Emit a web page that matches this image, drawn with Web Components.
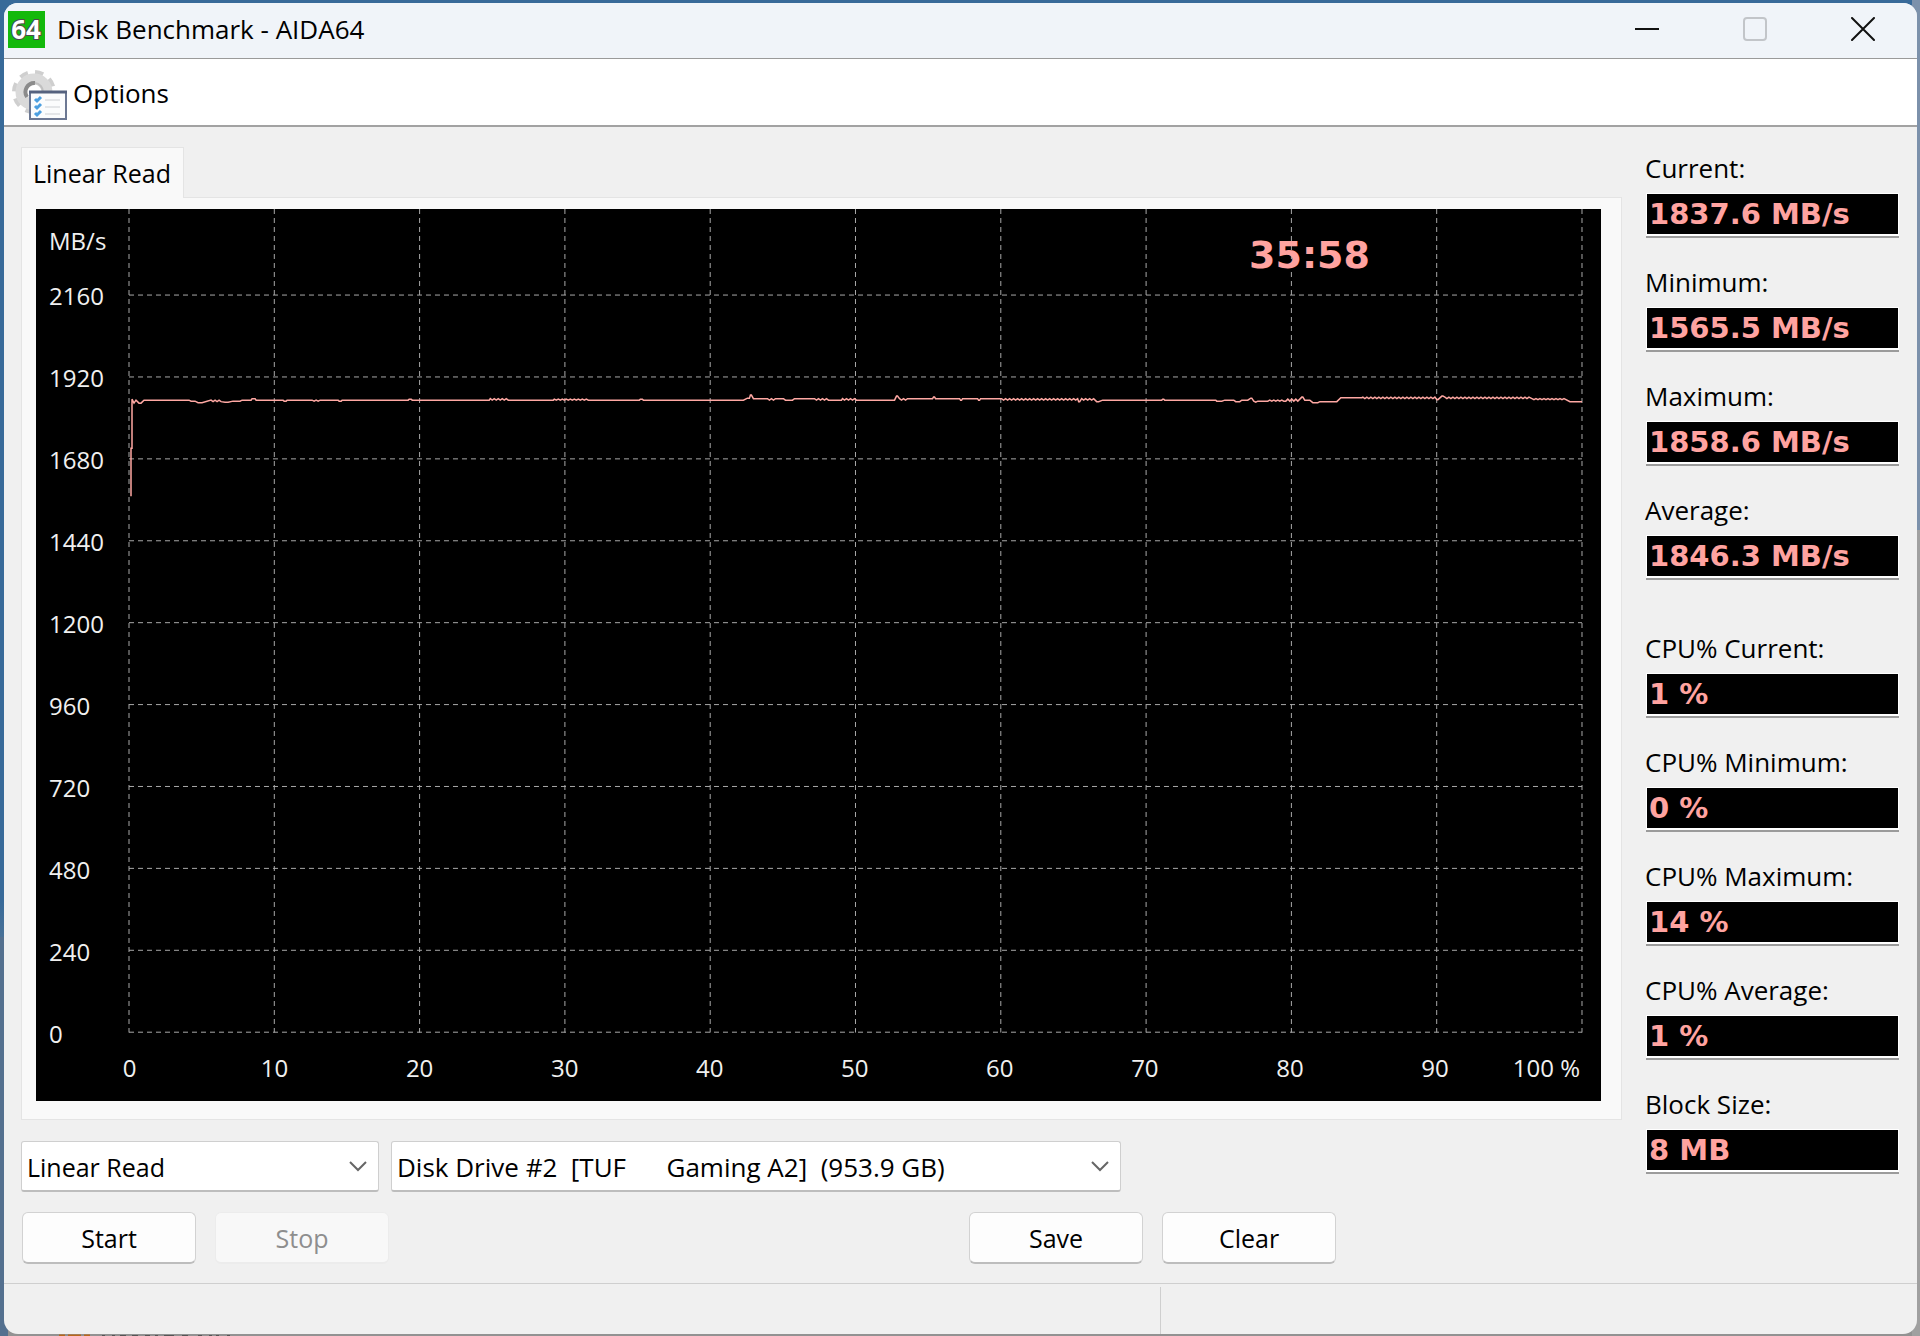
<!DOCTYPE html>
<html lang="en">
<head>
<meta charset="utf-8">
<title>Disk Benchmark - AIDA64</title>
<style>
  body {
    margin: 0;
    font: 26px/36px "Open Sans", "Noto Sans", sans-serif;
    color: #000;
  }
</style>
</head>
<body>
<disk-benchmark></disk-benchmark>

<script>
// Title bar with the app badge and the three caption buttons
class TitleBar extends HTMLElement {
  constructor() {
    super();
    this.attachShadow({ mode: 'open' });
    this.shadowRoot.innerHTML = `
      <style>
        :host {
          display: flex;
          align-items: flex-start;
          height: 55px;
          padding-left: 4px;
          background: #f0f4f9;
          border-bottom: 1px solid #9a9a9a;
        }
        .badge {
          width: 37px;
          height: 37px;
          margin-top: 8px;
          background: #13b90c;
          flex: none;
        }
        .badge text {
          font: bold 26px "Open Sans", sans-serif;
          fill: #fff;
          stroke: #4b4b4b;
          stroke-width: 2;
          paint-order: stroke;
        }
        .title {
          flex: 1;
          padding-left: 12px;
          line-height: 52px;
        }
        button {
          width: 108px;
          height: 52px;
          padding: 0;
          border: 0;
          background: none;
          color: #111;
        }
        button:disabled { color: #c2c5c9; }
        button svg { display: block; margin: 0 auto; }
      </style>
      <svg class="badge" viewBox="0 0 37 37" aria-hidden="true">
        <text x="18" y="28" text-anchor="middle">64</text>
      </svg>
      <span class="title"><slot></slot></span>
      <button type="button" aria-label="Minimize">
        <svg width="24" height="24" viewBox="0 0 24 24"><path d="M0 12h24" stroke="currentColor" stroke-width="2"/></svg>
      </button>
      <button type="button" aria-label="Maximize" disabled>
        <svg width="24" height="24" viewBox="0 0 24 24"><rect x="1" y="1" width="22" height="22" rx="3" fill="none" stroke="currentColor" stroke-width="2"/></svg>
      </button>
      <button type="button" aria-label="Close">
        <svg width="24" height="24" viewBox="0 0 24 24"><path d="M1 1l22 22M23 1L1 23" stroke="currentColor" stroke-width="2" stroke-linecap="round"/></svg>
      </button>
    `;
  }
}

customElements.define('title-bar', TitleBar);

// Toolbar with a single Options entry
class OptionsBar extends HTMLElement {
  constructor() {
    super();
    this.attachShadow({ mode: 'open' });
    this.shadowRoot.innerHTML = `
      <style>
        :host {
          display: flex;
          height: 66px;
          background: #fff;
          border-bottom: 2px solid #a2a2a2;
        }
        button {
          display: flex;
          align-items: center;
          gap: 5px;
          padding: 2px 8px 0;
          border: 0;
          background: none;
          font: inherit;
          color: inherit;
        }
      </style>
      <button type="button">
        <svg width="56" height="56" viewBox="0 0 56 56" aria-hidden="true">
          <g fill="none">
            <circle cx="22" cy="27" r="19" stroke="#cfcfcf" stroke-width="6" stroke-dasharray="8 7"/>
            <circle cx="22" cy="27" r="13" stroke="#dadada" stroke-width="11"/>
            <path d="M15 32a9 9 0 0 1 8-14" stroke="#8b8b8b" stroke-width="4"/>
            <path d="M23 18a9 9 0 0 1 8 9" stroke="#c0c0c0" stroke-width="2"/>
          </g>
          <rect x="18" y="27" width="36" height="27" fill="#fbfcfd" stroke="#6c7893" stroke-width="2"/>
          <path d="M17 27h38" stroke="#55627f" stroke-width="3"/>
          <path d="M23 34l2 2 4-4M23 41l2 2 4-4M23 48l2 2 4-4" fill="none" stroke="#4c9fe0" stroke-width="3"/>
          <path d="M33 35h15M33 42h15M33 49h15" stroke="#cdd0d4" stroke-width="1"/>
        </svg>
        <slot></slot>
      </button>
    `;
  }
}

customElements.define('options-bar', OptionsBar);

// Read speed over disk position: dashed grid, axis labels and the trace
class SpeedChart extends HTMLElement {
  constructor() {
    super();
    this.attachShadow({ mode: 'open' });
    this.shadowRoot.innerHTML = `
      <style>
        :host {
          display: grid;
          grid-template-columns: 93px 1fr 19px;
          grid-template-rows: 823fr 68fr;
          background: #000;
          color: #f0f0f0;
          font-size: 24px;
          line-height: 24px;
        }
        .speed {
          grid-area: 1 / 1 / 3 / 2;
          display: grid;
          grid-template-rows: 46fr repeat(10, 82fr) 26fr;
          align-items: center;
          padding-left: 13px;
        }
        .speed .unit {
          align-self: end;
          padding-bottom: 2px;
        }
        .plot {
          grid-area: 1 / 2;
          position: relative;
          min-height: 0;
        }
        svg {
          display: block;
          width: 100%;
          height: 100%;
          overflow: visible;
        }
        path {
          fill: none;
          vector-effect: non-scaling-stroke;
        }
        .grid { stroke: #a8a8a8; stroke-dasharray: 5 4; }
        .trace { stroke: #ffa8a3; stroke-width: 1.5; }
        .time {
          position: absolute;
          top: 24px;
          right: 212px;
          font: bold 38px/44px "DejaVu Sans", sans-serif;
          color: #ffa3a0;
        }
        .position {
          grid-area: 2 / 1 / 3 / 4;
          display: grid;
          grid-template-columns: repeat(10, 2fr) 1fr;
          align-items: center;
          padding: 2px 21px 0;
          text-align: center;
        }
        .position .last {
          justify-self: end;
          white-space: nowrap;
        }
      </style>
      <div class="speed"><span class="unit">MB/s</span></div>
      <div class="plot">
        <svg viewBox="0 0 1452 823" preserveAspectRatio="none">
          <path class="grid"/>
          <path class="trace"/>
        </svg>
        <span class="time"></span>
      </div>
      <div class="position"></div>
    `;
  }

  connectedCallback() {
    const root = this.shadowRoot;
    const speed = root.querySelector('.speed');
    const position = root.querySelector('.position');
    root.querySelector('.time').textContent = this.getAttribute('time');

    for (let mb = 2160; mb >= 0; mb -= 240) {
      speed.appendChild(this._label(mb));
    }
    for (let pct = 0; pct < 100; pct += 10) {
      position.appendChild(this._label(pct));
    }
    const last = this._label('100 %');
    last.className = 'last';
    position.appendChild(last);

    root.querySelector('.grid').setAttribute('d', this._grid());
    root.querySelector('.trace').setAttribute('d', this._trace());
  }

  _label(text) {
    const span = document.createElement('span');
    span.textContent = text;
    return span;
  }

  _grid() {
    let d = '';
    for (let i = 0; i <= 10; i++) {
      d += `M${i * 145.2} 0V823`;
    }
    for (let i = 0; i < 10; i++) {
      d += `M0 ${86 + i * 81.85}H1452`;
    }
    return d;
  }

  // Each run is [from, to, y] for a flat part or [from, to, y, y2] for a ripple
  _trace() {
    const runs = [
      [15, 60, 191],
      [62, 66, 192], [69, 73, 193.5], [82, 92, 191, 192.5], [96, 99, 193],
      [104, 111, 192], [113, 122, 191], [123, 126, 189.5], [127, 154, 191],
      [155, 157, 192], [158, 182, 191], [183, 191, 191, 192], [192, 209, 191],
      [210, 212, 192], [213, 279, 191], [280, 282, 190], [283, 360, 191],
      [361, 380, 189.5, 191], [381, 424, 191], [425, 460, 190, 191], [461, 510, 191],
      [511, 513, 190], [514, 614, 191], [618, 620, 189],
      [621, 622, 186], [624, 637, 189.5], [638, 644, 189.5, 191],
      [646, 654, 189.5], [656, 663, 191], [665, 684, 189.5],
      [685, 700, 189.5, 191], [702, 712, 191], [713, 727, 189.5, 191],
      [734, 765, 191], [767, 768, 187], [770, 778, 189.5, 191],
      [780, 803, 189.5], [804, 805, 188], [806, 830, 189.5], [831, 832, 191],
      [833, 848, 189.5], [849, 850, 191], [851, 871, 189.5],
      [872, 948, 189.5, 191], [949, 950, 192.5], [952, 965, 189.5, 191],
      [967, 969, 192.5], [973, 1032, 191], [1033, 1034, 190],
      [1035, 1086, 191], [1087, 1092, 192], [1095, 1104, 191],
      [1106, 1110, 192.5], [1112, 1118, 191], [1121, 1122, 189],
      [1124, 1128, 192, 193], [1130, 1138, 192], [1140, 1154, 191, 192],
      [1156, 1170, 192, 190], [1172, 1173, 188], [1175, 1180, 191],
      [1183, 1188, 193.5], [1190, 1207, 192.5], [1211, 1213, 188.5],
      [1215, 1232, 188.5], [1233, 1306, 188, 189.5], [1307, 1308, 190.5],
      [1312, 1313, 187], [1315, 1400, 188, 189.5], [1402, 1434, 189.5, 190.5],
      [1440, 1452, 192.5],
    ];
    let d = 'M2 287V239H3V190L5 194L7 191L10 194H12';
    for (const [from, to, y, y2 = y] of runs) {
      d += `L${from} ${y}`;
      if (y === y2) {
        d += `H${to}`;
        continue;
      }
      for (let x = from + 2, i = 1; x <= to; x += 2, i++) {
        d += `L${x} ${i % 2 ? y2 : y}`;
      }
    }
    return d;
  }
}

customElements.define('speed-chart', SpeedChart);

// One tab and the panel below it
class TabPanel extends HTMLElement {
  constructor() {
    super();
    this.attachShadow({ mode: 'open' });
    this.shadowRoot.innerHTML = `
      <style>
        :host {
          display: flex;
          flex-direction: column;
        }
        button {
          align-self: flex-start;
          height: 51px;
          margin-bottom: -1px;
          padding: 0 12px 0 11px;
          border: 1px solid #e4e4e4;
          border-bottom: 0;
          background: #f9f9f9;
          font: inherit;
          font-size: 25px;
          color: inherit;
          z-index: 1;
        }
        .panel {
          flex: 1;
          display: flex;
          padding: 11px 20px 18px 14px;
          border: 1px solid #e4e4e4;
          background: #f9f9f9;
        }
        ::slotted(*) { flex: 1; }
      </style>
      <button type="button" role="tab" aria-selected="true"></button>
      <div class="panel" role="tabpanel"><slot></slot></div>
    `;
  }

  connectedCallback() {
    this.shadowRoot.querySelector('button').textContent = this.getAttribute('label');
  }
}

customElements.define('tab-panel', TabPanel);

// Label with a black LED style value box
class ValueReadout extends HTMLElement {
  constructor() {
    super();
    this.attachShadow({ mode: 'open' });
    this.shadowRoot.innerHTML = `
      <style>
        :host {
          display: flex;
          flex-direction: column;
          gap: 7px;
        }
        output {
          height: 40px;
          margin-left: 1px;
          padding-left: 2px;
          border: 1px solid #fff;
          border-bottom-width: 2px;
          box-shadow: 0 2px #9b9b9b;
          background: #000;
          font: bold 29px/40px "DejaVu Sans", sans-serif;
          color: #ffa3a0;
        }
      </style>
      <label for="value"></label>
      <output id="value"><slot></slot></output>
    `;
  }

  connectedCallback() {
    this.shadowRoot.querySelector('label').textContent = this.getAttribute('label');
  }
}

customElements.define('value-readout', ValueReadout);

// Drop-down with a thin chevron
class DropDown extends HTMLElement {
  constructor() {
    super();
    this.attachShadow({ mode: 'open' });
    this.shadowRoot.innerHTML = `
      <style>
        :host {
          display: block;
          position: relative;
        }
        select {
          appearance: none;
          display: block;
          width: 100%;
          height: 51px;
          padding: 2px 40px 0 5px;
          border: 1px solid #cfcfcf;
          border-bottom: 2px solid #bdbdbd;
          border-radius: 3px;
          background: #fff;
          font: inherit;
          color: #000;
        }
        svg {
          position: absolute;
          top: 20px;
          right: 12px;
          pointer-events: none;
        }
      </style>
      <select><option></option></select>
      <svg width="18" height="12" viewBox="0 0 18 12"><path d="M1 1l8 8 8-8" fill="none" stroke="#666" stroke-width="2"/></svg>
    `;
  }

  connectedCallback() {
    const select = this.shadowRoot.querySelector('select');
    select.setAttribute('aria-label', this.getAttribute('label'));
    select.options[0].textContent = this.getAttribute('value');
  }
}

customElements.define('drop-down', DropDown);

class PushButton extends HTMLElement {
  constructor() {
    super();
    this.attachShadow({ mode: 'open' });
    this.shadowRoot.innerHTML = `
      <style>
        :host { display: block; }
        button {
          display: block;
          width: 174px;
          height: 52px;
          padding: 2px 0 0;
          border: 1px solid #d2d2d2;
          border-bottom: 2px solid #bdbdbd;
          border-radius: 6px;
          background: #fdfdfd;
          font: inherit;
          font-size: 25px;
          color: #000;
        }
        button:disabled {
          border-color: #ececec;
          background: #f8f8f8;
          color: #8e8e8e;
        }
      </style>
      <button type="button"><slot></slot></button>
    `;
  }

  connectedCallback() {
    this.shadowRoot.querySelector('button').disabled = this.hasAttribute('disabled');
  }
}

customElements.define('push-button', PushButton);

class DiskBenchmark extends HTMLElement {
  constructor() {
    super();
    this.attachShadow({ mode: 'open' });
    this.shadowRoot.innerHTML = `
      <style>
        :host {
          display: flex;
          flex-direction: column;
          box-sizing: border-box;
          min-height: 100vh;
          padding: 3px 3px 0 4px;
          background:
            linear-gradient(to right, #54708f 8px, transparent 8px) left bottom / 100% 400px no-repeat,
            linear-gradient(#7c91ab 530px, #a0a0a0 530px) right top / 8px 100% no-repeat,
            linear-gradient(#386a99 900px, #929292 1100px);
        }
        .window {
          flex: 1;
          display: flex;
          flex-direction: column;
          border-radius: 14px;
          overflow: hidden;
          background: #f0f0f0;
        }
        .content {
          flex: 1;
          display: grid;
          grid-template-columns: 1fr 254px;
          column-gap: 23px;
          padding: 20px 18px 19px 17px;
        }
        .main {
          display: flex;
          flex-direction: column;
        }
        tab-panel { flex: 1; }
        .choices {
          display: flex;
          gap: 12px;
          margin-top: 21px;
        }
        .mode { width: 358px; font-size: 25px; }
        .drive { width: 730px; }
        .actions {
          display: flex;
          gap: 19px;
          margin: 20px 286px 0 1px;
        }
        .save { margin-left: auto; }
        .side {
          display: flex;
          flex-direction: column;
          gap: 52px;
          padding-top: 3px;
        }
        .group {
          display: flex;
          flex-direction: column;
          gap: 28px;
        }
        .status {
          display: grid;
          grid-template-columns: 1157fr 757fr;
          height: 50px;
          border-top: 1px solid #cfcfcf;
        }
        .status div + div {
          margin-top: 3px;
          border-left: 1px solid #cfcfcf;
        }
        /* top edge of the window lying behind this one */
        .behind {
          display: flex;
          height: 3px;
          padding-left: 55px;
          overflow: hidden;
        }
      </style>
      <div class="window">
        <title-bar>Disk Benchmark - AIDA64</title-bar>
        <options-bar>Options</options-bar>
        <div class="content">
          <div class="main">
            <tab-panel label="Linear Read">
              <speed-chart time="35:58"></speed-chart>
            </tab-panel>
            <div class="choices">
              <drop-down class="mode" label="Test" value="Linear Read"></drop-down>
              <drop-down class="drive" label="Drive" value="Disk Drive #2&nbsp; [TUF&nbsp;&nbsp;&nbsp;&nbsp;&nbsp; Gaming A2]&nbsp; (953.9 GB)"></drop-down>
            </div>
            <div class="actions">
              <push-button>Start</push-button>
              <push-button disabled>Stop</push-button>
              <push-button class="save">Save</push-button>
              <push-button>Clear</push-button>
            </div>
          </div>
          <div class="side">
            <div class="group">
              <value-readout label="Current:">1837.6 MB/s</value-readout>
              <value-readout label="Minimum:">1565.5 MB/s</value-readout>
              <value-readout label="Maximum:">1858.6 MB/s</value-readout>
              <value-readout label="Average:">1846.3 MB/s</value-readout>
            </div>
            <div class="group">
              <value-readout label="CPU% Current:">1 %</value-readout>
              <value-readout label="CPU% Minimum:">0 %</value-readout>
              <value-readout label="CPU% Maximum:">14 %</value-readout>
              <value-readout label="CPU% Average:">1 %</value-readout>
              <value-readout label="Block Size:">8 MB</value-readout>
            </div>
          </div>
        </div>
        <div class="status"><div></div><div></div></div>
      </div>
      <div class="behind">
        <svg width="180" height="3" viewBox="0 0 180 3" aria-hidden="true">
          <path d="M0 2h6M9 2h13M25 2h6" stroke="#b8681c" stroke-width="3"/>
          <path d="M43 2h3M53 2h3M61 2h6M73 2h6M86 2h5M96 2h3M105 2h10M123 2h6M139 2h4M150 2h3M157 2h3M168 2h3" stroke="#555" stroke-width="2"/>
        </svg>
      </div>
    `;
  }
}

customElements.define('disk-benchmark', DiskBenchmark);
</script>
</body>
</html>
